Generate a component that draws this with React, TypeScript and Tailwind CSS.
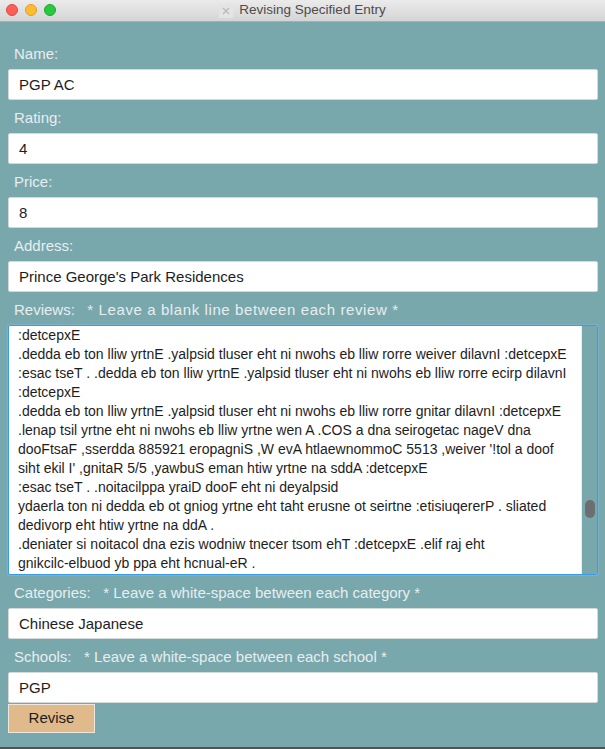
import React from "react";

const reviewLines = [
  ":detcepxE",
  ".dedda eb ton lliw yrtnE .yalpsid tluser eht ni nwohs eb lliw rorre weiver dilavnI :detcepxE",
  ":esac tseT . .dedda eb ton lliw yrtnE .yalpsid tluser eht ni nwohs eb lliw rorre ecirp dilavnI",
  ":detcepxE",
  ".dedda eb ton lliw yrtnE .yalpsid tluser eht ni nwohs eb lliw rorre gnitar dilavnI :detcepxE",
  ".lenap tsil yrtne eht ni nwohs eb lliw yrtne wen A .COS a dna seirogetac nageV dna",
  "dooFtsaF ,sserdda 885921 eropagniS ,W evA htlaewnommoC 5513 ,weiver '!tol a doof",
  "siht ekil I' ,gnitaR 5/5 ,yawbuS eman htiw yrtne na sddA :detcepxE",
  ":esac tseT . .noitacilppa yraiD dooF eht ni deyalpsid",
  "ydaerla ton ni dedda eb ot gniog yrtne eht taht erusne ot seirtne :etisiuqererP . sliated",
  "dedivorp eht htiw yrtne na ddA .",
  ".deniater si noitacol dna ezis wodniw tnecer tsom ehT :detcepxE .elif raj eht",
  "gnikcilc-elbuod yb ppa eht hcnual-eR .",
];

function FieldLabel({ children }: { children: React.ReactNode }) {
  return (
    <div className="h-[33px] flex items-center pt-[3px] pl-[6px] text-[15px] text-[#e8eef0] whitespace-pre">
      {children}
    </div>
  );
}

function TextField({ value }: { value: string }) {
  return (
    <div className="h-[31px] flex items-center pt-px bg-white border border-[#d4d9da] rounded-[2px] pl-[10px] text-[15px] text-[#1d1d1d]">
      {value}
    </div>
  );
}

function TitleBar() {
  return (
    <div className="relative h-[22px] flex items-center justify-center bg-gradient-to-b from-[#ebebeb] to-[#d5d5d5] border-b border-[#acacac]">
      <div className="absolute left-[6px] top-[4px] flex gap-[7px]">
        <span className="w-[12px] h-[12px] rounded-full bg-[#fc5f57] border border-[#de4b43]" />
        <span className="w-[12px] h-[12px] rounded-full bg-[#fdbc2e] border border-[#dea123]" />
        <span className="w-[12px] h-[12px] rounded-full bg-[#28c840] border border-[#1daa2c]" />
      </div>
      <div className="flex items-center gap-[6px] text-[13.5px] text-[#4c4c4c]">
        <svg width="14" height="14" viewBox="0 0 14 14">
          <rect x="0" y="0" width="14" height="14" fill="#e4e4e4" />
          <path d="M4 4 L10 10 M10 4 L4 10" stroke="#b8b8b8" strokeWidth="1.2" />
        </svg>
        <span>Revising Specified Entry</span>
      </div>
    </div>
  );
}

export default function App() {
  return (
    <div
      className="w-[605px] h-[749px] flex flex-col bg-[#78a7ac] border-b-2 border-[#5a5048] overflow-hidden"
      style={{ fontFamily: '"Liberation Sans", Arial, sans-serif' }}
    >
      <TitleBar />
      <div className="flex flex-col pt-[14px] pl-[8px] pr-[7px]">
        <FieldLabel>Name:</FieldLabel>
        <TextField value="PGP AC" />
        <FieldLabel>Rating:</FieldLabel>
        <TextField value="4" />
        <FieldLabel>Price:</FieldLabel>
        <TextField value="8" />
        <FieldLabel>Address:</FieldLabel>
        <TextField value="Prince George's Park Residences" />
        <FieldLabel>
          <span>{"Reviews:   "}</span>
          <span className="tracking-[0.6px]">* Leave a blank line between each review *</span>
        </FieldLabel>

        <div className="h-[250px] flex bg-white border border-[#3a9be6] rounded-[2px] shadow-[0_0_0_1px_rgba(120,190,240,0.5)] overflow-hidden">
          <div className="flex-1 pl-[9px] text-[14px] leading-[19px] text-[#1d1d1d] whitespace-pre overflow-hidden">
            {reviewLines.map((line, i) => (
              <div key={i}>{line}</div>
            ))}
          </div>
          <div className="w-[16px] relative bg-[#78a7ac] border-l border-[#e7f0f1]">
            <div className="absolute left-[3px] top-[174px] w-[10px] h-[18px] rounded-[5px] bg-[#6c6e6f]" />
          </div>
        </div>

        <FieldLabel>{"Categories:   * Leave a white-space between each category *"}</FieldLabel>
        <TextField value="Chinese Japanese" />
        <FieldLabel>{"Schools:   * Leave a white-space between each school *"}</FieldLabel>
        <TextField value="PGP" />
        <div className="pt-px">
          <button className="w-[87px] h-[29px] bg-[#e1ba8c] border border-[#ebe6de] text-[15px] text-[#1d1d1d]">
            Revise
          </button>
        </div>
      </div>
    </div>
  );
}
